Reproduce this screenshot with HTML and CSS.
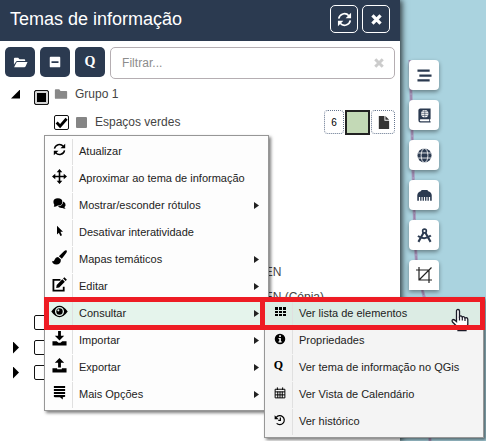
FILE: index.html
```html
<!DOCTYPE html>
<html lang="pt">
<head>
<meta charset="utf-8">
<title>Temas de informação</title>
<link rel="stylesheet" href="styles.css">
</head>
<body>
<svg width="0" height="0" class="defs">
  <symbol id="sync" viewBox="0 0 16 16"><path d="M1.800 7A6.200 6.200 0 0 1 12.600 4M14.200 9A6.200 6.200 0 0 1 3.400 12" fill="none" stroke="currentColor" stroke-width="1.800"/><path d="M15 .8V6.600H9.200ZM1 15.200V9.400H6.800Z"/></symbol>
  <symbol id="x" viewBox="0 0 16 16"><path d="M3 3L13 13M13 3L3 13" stroke="currentColor" stroke-width="4"/></symbol>
  <symbol id="open" viewBox="0 0 16 16"><path d="M1 10V4Q1 3 2 3H5.500L7 4.500H12Q13 4.500 13 5.500V6.500H4.500Q3.500 6.500 3 7.500Z"/><path d="M4.500 7.500H15.500L13.500 12Q13 13 12 13H1.200L3.500 8.200Q3.800 7.500 4.500 7.500Z"/></symbol>
  <symbol id="folder" viewBox="0 0 16 16"><path d="M1 3.500Q1 2.500 2 2.500H6L7.500 4.500H14Q15 4.500 15 5.500V12.500Q15 13.500 14 13.500H2Q1 13.500 1 12.500Z"/></symbol>
  <symbol id="minus" viewBox="0 0 16 16"><path fill-rule="evenodd" d="M3 2H13Q14 2 14 3V13Q14 14 13 14H3Q2 14 2 13V3Q2 2 3 2ZM4 7V9.200H12V7Z"/></symbol>
  <symbol id="file" viewBox="0 0 16 16"><path d="M3 1H9V6H14V15H3ZM10 1L14 5H10Z"/></symbol>
  <symbol id="move" viewBox="0 0 16 16"><path d="M8 2V14M2 8H14" stroke="currentColor" stroke-width="1.700"/><path d="M8 0L11 3.500H5ZM8 16L5 12.500H11ZM0 8L3.500 5V11ZM16 8L12.500 11V5Z"/></symbol>
  <symbol id="chat" viewBox="0 0 16 16"><ellipse cx="6" cy="6" rx="5.500" ry="4.500"/><path d="M1 12L2 8L6 10Q4 12 1 12ZM12.500 5.500Q15.800 7 15.500 10Q15.200 11.500 14 12.500L15.500 14.500Q13 14.500 11.500 13.500Q8 14 6 11.500Q12 11 12.500 5.500Z"/></symbol>
  <symbol id="arrow" viewBox="0 0 16 16"><path d="M4 1L12 9H8.600L10.700 13.500L8.500 14.500L6.500 10.200L4 12.500Z"/></symbol>
  <symbol id="brush" viewBox="0 0 16 16"><path d="M15.600 .4Q16.400 1.400 15 3.500L10.500 9.300L7.300 6.700L12.800 1.200Q14.500 -.2 15.600 .4ZM6.500 7.500L9.500 10.200Q9.500 15.500 4.500 15.500Q.5 15.500 0 11.500Q1.500 12.800 2.500 11Q4 7.500 6.500 7.500Z"/></symbol>
  <symbol id="edit" viewBox="0 0 16 16"><path d="M9 3H1.500V14.500H12.500V10.500" fill="none" stroke="currentColor" stroke-width="1.900"/><path d="M5 8.500L11 2.300L13.700 5L7.700 11.200L4.500 11.600ZM11.800 1.500L13.200 .2L15.900 2.900L14.500 4.200Z"/></symbol>
  <symbol id="eye" viewBox="0 0 18 14"><path fill-rule="evenodd" d="M.3 7Q9 -5 17.700 7Q9 19 .3 7ZM9 2.200A4.800 4.800 0 1 0 9 11.800A4.800 4.800 0 1 0 9 2.200Z"/><circle cx="9" cy="7" r="3.400"/><circle cx="7.800" cy="5.800" r="1.100" fill="#e5f4ec"/></symbol>
  <symbol id="down" viewBox="0 0 16 16"><path d="M6.500 0H9.500V5H13L8 10L3 5H6.500ZM.5 11H5L7 12.500H9L11 11H15.500V15.500H.5Z"/></symbol>
  <symbol id="up" viewBox="0 0 16 16"><path d="M8 0L13 5H9.500V10H6.500V5H3ZM.5 11H5.500V12H10.500V11H15.500V15.500H.5Z"/></symbol>
  <symbol id="stack" viewBox="0 0 16 16"><path d="M2 1H14V3.300H2ZM2 4.200H14V6.500H2ZM2 7.400H14V9.700H2ZM2 10.600H14V12.500L11.500 13V15.500L8.500 13H3L2 12.500Z"/></symbol>
  <symbol id="grid" viewBox="0 0 12 12"><path d="M1 1H4V4H1ZM5 1H8V4H5ZM9 1H12V4H9ZM1 5H4V7H1ZM5 5H8V7H5ZM9 5H12V7H9ZM1 8H4V10H1ZM5 8H8V10H5ZM9 8H12V10H9Z"/></symbol>
  <symbol id="info" viewBox="0 0 16 16"><path fill-rule="evenodd" d="M8 1A7 7 0 1 0 8 15A7 7 0 1 0 8 1ZM6.900 3H9.200V5.200H6.900ZM6 6.500H9.200V11H10.200V12.500H6V11H7V8H6Z"/></symbol>
  <symbol id="cal" viewBox="0 0 16 16"><path d="M1.500 3H14.500V14.500H1.500ZM1.500 6.500H14.500M1.500 10.500H14.500M5 6V14.500M8 6V14.500M11 6V14.500M4.500 .5V4M11.500 .5V4" fill="none" stroke="currentColor" stroke-width="1.300"/></symbol>
  <symbol id="hist" viewBox="0 0 16 16"><path d="M3 4.500A6 6 0 1 1 3.500 12.500M8.500 4.500V8.500H5.700" fill="none" stroke="currentColor" stroke-width="1.600"/><path d="M.8 1.500V7H6.200Z"/></symbol>
  <symbol id="bars" viewBox="0 0 16 16"><path d="M.5 1.500H13.500V4H.5ZM2.500 6.800H15.500V9.300H2.500ZM.5 12H13.500V14.500H.5Z"/></symbol>
  <symbol id="atlas" viewBox="0 0 16 16"><path fill-rule="evenodd" d="M3.500 .5H14.500V12H13.800V14H14.500V15.500H3.500Q1.500 15.500 1.500 13V2.500Q1.500 .5 3.500 .5ZM4 12Q3 12 3 13Q3 14 4 14H13V12Z"/><circle cx="8.300" cy="6" r="3.900" fill="#fff"/><path d="M4.500 6H12.200M8.300 2V10M5 4H11.500M5 8H11.500" stroke="currentColor" stroke-width=".6"/></symbol>
  <symbol id="globe" viewBox="0 0 16 16"><circle cx="8" cy="8" r="7.500"/><path d="M1 5.300H15M1 10.700H15" stroke="#fff" stroke-width=".9"/><ellipse cx="8" cy="8" rx="3.600" ry="7.500" fill="none" stroke="#fff" stroke-width=".9"/></symbol>
  <symbol id="dome" viewBox="0 0 16 16"><path d="M.3 9.500V7.500Q1 4 4 3.500L5 2.200H11L12 3.500Q15 4 15.700 7.500V13.700H14V9.500H12.600V13.700H11.200V9.500H10V13.700H8.600V9.500H7.400V13.700H6V9.500H4.800V13.700H3.400V9.500H2V13.700H.3Z"/></symbol>
  <symbol id="compass" viewBox="0 0 16 16"><path d="M7 5L1.500 14.800M9 5L14.500 14.800M1 8.500Q8 13.500 14.800 8" fill="none" stroke="currentColor" stroke-width="2.200"/><circle cx="8" cy="3.200" r="2" fill="none" stroke="currentColor" stroke-width="1.700"/></symbol>
  <symbol id="crop" viewBox="0 0 16 16"><path d="M3 0V13H16M0 3H13V16M3 13L15.500 .5" fill="none" stroke="currentColor" stroke-width="1.200"/></symbol>
</svg>

<div class="map">
  <svg class="route" width="40" height="441"><path d="M10 60L12 130L13 170L15 240L17 270L25 300L30 441" fill="none" stroke="#a79abd" stroke-width="3"/><path d="M10 60L12 130L13 170L15 240L17 270L25 300L30 441" fill="none" stroke="#9a80a8" stroke-width="1" stroke-dasharray="5 2"/></svg>
  <nav class="tools">
    <button><svg><use href="#bars"/></svg></button>
    <button><svg><use href="#atlas"/></svg></button>
    <button><svg><use href="#globe"/></svg></button>
    <button><svg><use href="#dome"/></svg></button>
    <button><svg><use href="#compass"/></svg></button>
    <button class="crop"><svg><use href="#crop"/></svg></button>
  </nav>
</div>

<main class="panel">
  <header class="head">
    <h1>Temas de informação</h1>
    <button><svg><use href="#sync"/></svg></button>
    <button><svg class="small"><use href="#x"/></svg></button>
  </header>
  <div class="bar">
    <button><svg><use href="#open"/></svg></button>
    <button><svg class="small"><use href="#minus"/></svg></button>
    <button><b>Q</b></button>
    <div class="filter"><span>Filtrar...</span><svg><use href="#x"/></svg></div>
  </div>
  <div class="row group"><i class="tri-open"></i><i class="check mixed"></i><svg><use href="#folder"/></svg><span>Grupo 1</span></div>
  <div class="row layer">
    <i class="check"><svg viewBox="0 0 12 12"><path d="M1.500 6L4.700 9.300L10.700 2.500" fill="none" stroke="#000" stroke-width="2.600"/></svg></i>
    <i class="square"></i><span>Espaços verdes</span>
    <div class="chips"><span class="chip">6</span><span class="chip green"></span><span class="chip"><svg><use href="#file"/></svg></span></div>
  </div>
  <div class="hidden-rows">
    <div class="row tail">REN</div>
    <div class="row tail">REN (Cópia)</div>
    <div class="row stub first"><i class="check"></i></div>
    <div class="row stub"><i class="tri"></i><i class="check"></i></div>
    <div class="row stub"><i class="tri"></i><i class="check"></i></div>
  </div>
</main>

<ul class="menu main-menu">
  <li><svg class="s14"><use href="#sync"/></svg><span>Atualizar</span></li>
  <li><svg><use href="#move"/></svg><span>Aproximar ao tema de informação</span></li>
  <li class="sub"><svg class="s13"><use href="#chat"/></svg><span>Mostrar/esconder rótulos</span></li>
  <li><svg class="s12"><use href="#arrow"/></svg><span>Desativar interatividade</span></li>
  <li class="sub"><svg><use href="#brush"/></svg><span>Mapas temáticos</span></li>
  <li class="sub"><svg class="wide"><use href="#edit"/></svg><span>Editar</span></li>
  <li class="sub active"><svg class="wide"><use href="#eye"/></svg><span>Consultar</span></li>
  <li class="sub"><svg><use href="#down"/></svg><span>Importar</span></li>
  <li class="sub"><svg><use href="#up"/></svg><span>Exportar</span></li>
  <li class="sub"><svg><use href="#stack"/></svg><span>Mais Opções</span></li>
</ul>
<ul class="menu sub-menu">
  <li class="active"><svg><use href="#grid"/></svg><span>Ver lista de elementos</span></li>
  <li><svg><use href="#info"/></svg><span>Propriedades</span></li>
  <li><b>Q</b><span>Ver tema de informação no QGis</span></li>
  <li><svg><use href="#cal"/></svg><span>Ver Vista de Calendário</span></li>
  <li><svg><use href="#hist"/></svg><span>Ver histórico</span></li>
</ul>
<svg class="hand" viewBox="0 0 18 23"><path d="M5.500 13V2.500Q5.500 1 7 1T8.500 2.500V8Q10 6.500 11.200 8.500Q13 7.500 14 9.500Q16.500 8.500 16.800 11V16L15 19V22H7V19L1.500 13.500Q.5 11.500 2 11Q3.500 11 5.500 13Z" fill="#fff" stroke="#1b1b28" stroke-width="1.300"/><path d="M8.500 8V12M11.300 8.500V12M14 9.500V12.500" stroke="#1b1b28" stroke-width="1.200"/></svg>
<div class="mark mark-main"></div>
<div class="mark mark-sub"></div>
</body>
</html>
```
FILE: styles.css
```css
* { box-sizing: border-box; }
body { margin: 0; width: 486px; height: 441px; position: relative; overflow: hidden; font-family: "Liberation Sans", Arial, sans-serif; background: #aad3df; }
svg { fill: currentColor; flex: none; }
button { border: 0; padding: 0; margin: 0; display: flex; align-items: center; justify-content: center; }
ul { list-style: none; margin: 0; padding: 0; }
.defs { position: absolute; }

.map { position: absolute; left: 400px; top: 0; width: 86px; height: 441px; padding: 60px 0 0 9px; }
.route { position: absolute; left: 0; top: 0; }
.tools { position: relative; display: flex; flex-direction: column; gap: 10px; }
.tools button { width: 30px; height: 30px; border-radius: 4px; background: #fff; color: #2b3a50; box-shadow: 0 2px 4px rgba(0,0,0,.4); }
.tools svg { width: 15px; height: 15px; }
.tools .crop { color: #222; border-radius: 4px 4px 0 0; }
.tools .crop svg { width: 16px; height: 16px; }

.panel { position: absolute; left: 0; top: 0; width: 400px; height: 441px; background: #fff; box-shadow: 2px 0 6px rgba(0,0,0,.75); }
.head { height: 41px; background: #2b3a50; color: #fff; display: flex; align-items: center; gap: 4px; padding: 0 10px 3px 10px; }
.head h1 { flex: 1; margin: 0; font-size: 18px; font-weight: 400; line-height: 24px; white-space: nowrap; }
.head button { width: 28px; height: 28px; border: 1px solid #fff; border-radius: 5px; background: none; color: #fff; }
.head svg { width: 15px; height: 15px; }
.head .small { width: 13px; height: 13px; }
.bar { display: flex; gap: 5px; padding: 6px 5px 0; height: 41px; }
.bar button { width: 30px; height: 30px; border-radius: 5px; background: #2b3a50; color: #fff; }
.bar button svg { width: 15px; height: 15px; }
.bar button .small { width: 14px; height: 14px; }
.bar b { font: 700 14px "Liberation Serif", serif; }
.filter { flex: 1; height: 32px; border: 1px solid #b5aeb2; border-radius: 5px; display: flex; align-items: center; justify-content: space-between; padding: 0 9px 0 11px; font-size: 12px; letter-spacing: .05px; color: #8c8c8c; }
.filter svg { width: 12px; height: 12px; color: #ccc; }

.row { display: flex; align-items: center; font-size: 12px; color: #444; letter-spacing: 0; }
.check { width: 15px; height: 15px; border: 1.500px solid #111; border-radius: 2px; flex: none; background: #fff; }
.check svg { display: block; width: 13px; height: 13px; }
.mixed { background: #000; box-shadow: inset 0 0 0 2px #d4d4d4; margin-top: 6px; }
.group { height: 24px; padding-left: 11px; }
.group svg { width: 14px; height: 14px; color: #888; margin: 0 7px 0 5px; }
.tri-open { width: 9px; height: 9px; background: #000; clip-path: polygon(100% 0, 100% 100%, 0 100%); margin-right: 14px; }
.layer { height: 32px; padding: 0 5px 0 54px; }
.square { width: 11px; height: 11px; border-radius: 1px; background: #858585; margin: 0 8px 0 7px; }
.chips { margin-left: auto; display: flex; gap: 2px; }
.chip { width: 20px; height: 24px; border: 1px dotted #65758e; border-radius: 4px; display: flex; align-items: center; justify-content: center; font-size: 10px; color: #000; }
.chip:last-child { width: 24px; }
.chip svg { width: 15px; height: 15px; color: #333; }
.green { width: 23px; }
.green::before { content: ""; width: 21px; height: 21px; border: 2px solid #222; background: #c3d9b6; flex: none; }
.hidden-rows { padding-top: 121px; }
.tail { height: 25px; padding-left: 256px; }
.stub { height: 25px; padding-left: 34px; }
.first { margin-top: 1px; }
.tri { width: 6px; height: 12px; margin: 0 15px 0 -21px; background: #000; clip-path: polygon(0 0, 100% 50%, 0 100%); }

.menu { position: absolute; border: 1px solid #979797; padding: 2px 0; background: #fdfdfd; box-shadow: 2px 2px 3px rgba(0,0,0,.5); }
.main-menu { left: 44px; top: 135px; width: 225px; }
.sub-menu { left: 264px; top: 297px; width: 220px; background: #f4f4f4; }
.menu li { height: 27px; display: grid; grid-template-columns: 27px 1fr; align-items: center; justify-items: center; font-size: 12px; color: #222; position: relative; }
.menu li > svg { width: 15px; height: 15px; margin: -4px 0 0 2px; }
.menu li > .s14 { width: 13px; height: 13px; }
.menu li > .s13 { width: 13px; height: 13px; }
.menu li > .s12 { width: 12px; height: 12px; }
.menu li > .wide { width: 17px; height: 15px; }
.menu li svg, .menu li b { color: #000; }
.menu li span { justify-self: stretch; height: 26px; line-height: 25px; border-left: 1px solid #e0e0e0; padding-left: 6px; white-space: nowrap; font-size: 11px; }
.menu .active { background: #e5f4ec; }
.sub-menu .active { background: #dcece4; }
.sub-menu li > svg { width: 12px; height: 12px; }
.menu b { font: 700 12px "Liberation Serif", serif; margin-top: -4px; }
.sub::after { content: ""; position: absolute; right: 9px; top: 10px; width: 5px; height: 7px; background: #222; clip-path: polygon(0 0, 100% 50%, 0 100%); }
.mark { position: absolute; border: 5px solid #ee1c24; top: 297px; height: 33px; }
.mark-main { left: 44px; width: 221px; }
.mark-sub { left: 260px; width: 225px; }
.hand { position: absolute; left: 451px; top: 308px; width: 18px; height: 24px; }
```
